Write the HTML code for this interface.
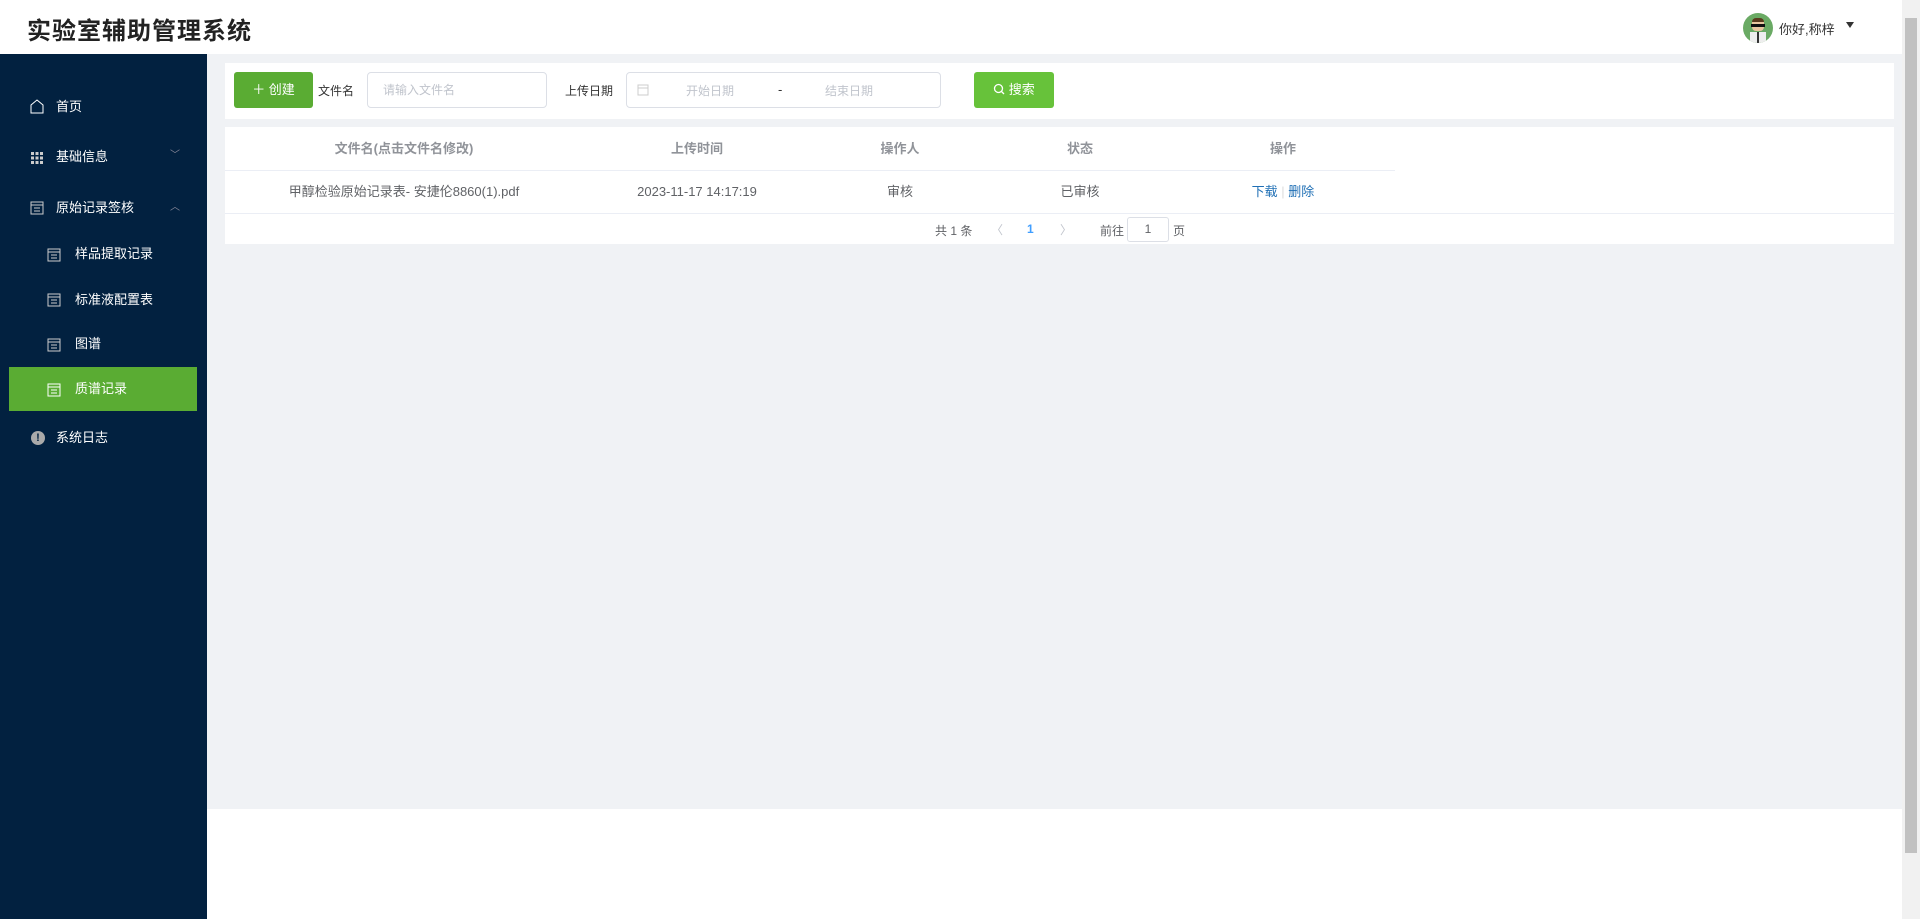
<!DOCTYPE html>
<html><head><meta charset="utf-8"><style>
*{margin:0;padding:0;box-sizing:border-box}
body{width:1920px;height:919px;overflow:hidden;font-family:"Liberation Sans","Noto Sans CJK SC",sans-serif;background:#fff;position:relative;color:#606266;font-size:14px}
.abs{position:absolute}
.hdr{left:0;top:0;width:1902px;height:54px;background:#fff}
.title{left:27px;top:11px;font-size:24px;font-weight:bold;color:#222;letter-spacing:1px}
.side{left:0;top:54px;width:207px;height:865px;background:#022140}
.main{left:207px;top:54px;width:1695px;height:755px;background:#f0f2f5}
.sb{left:1902px;top:0;width:18px;height:919px;background:#f1f1f1}
.sbt{left:1905px;top:18px;width:12px;height:835px;background:#c1c1c1}
.mi{position:absolute;color:#fff;font-size:13px;height:20px;line-height:20px}
.card{background:#fff}
.btn{border-radius:3px;color:#fff;text-align:center;font-size:13px;line-height:36px}
.inp{border:1px solid #dcdfe6;border-radius:4px;background:#fff;color:#c0c4cc;font-size:13px}
.th{position:absolute;top:127px;height:43px;line-height:43px;text-align:center;color:#909399;font-weight:bold;font-size:13px}
.td{position:absolute;top:170px;height:43px;line-height:43px;text-align:center;color:#606266;font-size:13px}
</style></head><body>
<div class="abs hdr"></div>
<div class="abs title">实验室辅助管理系统</div>
<div class="abs" style="left:1743px;top:13px;width:30px;height:30px;border-radius:50%;background:#6aaa64;overflow:hidden">
<div style="position:absolute;left:9px;top:5px;width:12px;height:13px;background:#e9c6a0;border-radius:4px;border-top:4px solid #5a3a1e"></div>
<div style="position:absolute;left:8px;top:11px;width:14px;height:3px;background:#111"></div>
<div style="position:absolute;left:7px;top:19px;width:16px;height:12px;background:#eee"></div>
<div style="position:absolute;left:14px;top:19px;width:2px;height:11px;background:#333"></div></div>
<div class="abs" style="left:1779px;top:19px;font-size:13px;color:#333">你好,称梓</div>
<div class="abs" style="left:1846px;top:22px;width:0;height:0;border-left:4px solid transparent;border-right:4px solid transparent;border-top:6px solid #333"></div>

<div class="abs side"></div>
<svg class="abs" style="left:30px;top:99px" width="14" height="15" viewBox="0 0 14 15"><path d="M1 6 L7 1 L13 6 V14 H1Z" fill="none" stroke="#fff" stroke-width="1"/></svg>
<div class="mi" style="left:56px;top:97px">首页</div>
<svg class="abs" style="left:31px;top:152px" width="12" height="12"><g fill="#ccc"><rect x="0" y="0" width="3" height="3"/><rect x="4.5" y="0" width="3" height="3"/><rect x="9" y="0" width="3" height="3"/><rect x="0" y="4.5" width="3" height="3"/><rect x="4.5" y="4.5" width="3" height="3"/><rect x="9" y="4.5" width="3" height="3"/><rect x="0" y="9" width="3" height="3"/><rect x="4.5" y="9" width="3" height="3"/><rect x="9" y="9" width="3" height="3"/></g></svg>
<div class="mi" style="left:56px;top:147px">基础信息</div>
<div class="mi" style="left:170px;top:146px;color:#889;font-size:10px">﹀</div>
<svg class="abs" style="left:30px;top:201px" width="14" height="14"><rect x="1" y="1" width="12" height="12" fill="none" stroke="#ccc"/><path d="M1 4H13M4 7H10M4 10H10" stroke="#ccc"/></svg>
<div class="mi" style="left:56px;top:198px">原始记录签核</div>
<div class="mi" style="left:170px;top:198px;color:#889;font-size:10px">︿</div>
<div class="abs" style="left:9px;top:367px;width:188px;height:44px;background:#5aac33"></div>
<svg class="abs" style="left:47px;top:248px" width="14" height="14"><rect x="1" y="1" width="12" height="12" fill="none" stroke="#ccc"/><path d="M1 4H13M4 7H10M4 10H10" stroke="#ccc"/></svg>
<div class="mi" style="left:75px;top:244px">样品提取记录</div>
<svg class="abs" style="left:47px;top:293px" width="14" height="14"><rect x="1" y="1" width="12" height="12" fill="none" stroke="#ccc"/><path d="M1 4H13M4 7H10M4 10H10" stroke="#ccc"/></svg>
<div class="mi" style="left:75px;top:290px">标准液配置表</div>
<svg class="abs" style="left:47px;top:338px" width="14" height="14"><rect x="1" y="1" width="12" height="12" fill="none" stroke="#ccc"/><path d="M1 4H13M4 7H10M4 10H10" stroke="#ccc"/></svg>
<div class="mi" style="left:75px;top:334px">图谱</div>
<svg class="abs" style="left:47px;top:383px" width="14" height="14"><rect x="1" y="1" width="12" height="12" fill="none" stroke="#fff"/><path d="M1 4H13M4 7H10M4 10H10" stroke="#fff"/></svg>
<div class="mi" style="left:75px;top:379px">质谱记录</div>
<div class="abs" style="left:31px;top:431px;width:14px;height:14px;border-radius:50%;background:#aaa;color:#022140;font-size:11px;line-height:14px;text-align:center;font-weight:bold">!</div>
<div class="mi" style="left:56px;top:428px">系统日志</div>

<div class="abs main"></div>
<div class="abs card" style="left:225px;top:63px;width:1669px;height:56px"></div>
<div class="abs btn" style="left:234px;top:72px;width:79px;background:#5aac33">＋ 创建</div>
<div class="abs" style="left:318px;top:82px;font-size:12px;color:#333">文件名</div>
<div class="abs inp" style="left:367px;top:72px;width:180px;height:36px;padding:0 15px;line-height:34px;font-size:12px">请输入文件名</div>
<div class="abs" style="left:565px;top:82px;font-size:12px;color:#333">上传日期</div>
<div class="abs inp" style="left:626px;top:72px;width:315px;height:36px"></div>
<svg class="abs" style="left:637px;top:84px" width="12" height="12"><rect x="1" y="1" width="10" height="10" fill="none" stroke="#ccc"/><path d="M1 4H11" stroke="#ccc"/></svg>
<div class="abs" style="left:686px;top:82px;font-size:12px;color:#c0c4cc">开始日期</div>
<div class="abs" style="left:778px;top:82px;font-size:13px;color:#333">-</div>
<div class="abs" style="left:825px;top:82px;font-size:12px;color:#c0c4cc">结束日期</div>
<div class="abs btn" style="left:974px;top:72px;width:80px;background:#67c23a;font-size:13px"><svg width="12" height="12" style="vertical-align:-1px"><circle cx="5.5" cy="5.5" r="4" fill="none" stroke="#fff" stroke-width="1.3"/><path d="M8.5 8.5L11 11" stroke="#fff" stroke-width="1.3"/></svg> 搜索</div>

<div class="abs card" style="left:225px;top:127px;width:1669px;height:117px"></div>
<div class="abs" style="left:225px;top:170px;width:1170px;height:1px;background:#ebeef5"></div>
<div class="abs" style="left:225px;top:213px;width:1669px;height:1px;background:#ebeef5"></div>
<div class="th" style="left:225px;width:358px">文件名(点击文件名修改)</div>
<div class="th" style="left:583px;width:228px">上传时间</div>
<div class="th" style="left:811px;width:178px">操作人</div>
<div class="th" style="left:989px;width:182px">状态</div>
<div class="th" style="left:1171px;width:224px">操作</div>
<div class="td" style="left:225px;width:358px">甲醇检验原始记录表- 安捷伦8860(1).pdf</div>
<div class="td" style="left:583px;width:228px">2023-11-17 14:17:19</div>
<div class="td" style="left:811px;width:178px">审核</div>
<div class="td" style="left:989px;width:182px">已审核</div>
<div class="td" style="left:1171px;width:224px;color:#1f6fb5">下载 <span style="color:#ddd">|</span> 删除</div>
<div class="abs" style="left:935px;top:222px;font-size:12px;color:#606266">共 1 条</div>
<div class="abs" style="left:991px;top:221px;font-size:12px;color:#c0c4cc">〈</div>
<div class="abs" style="left:1027px;top:222px;font-size:12px;color:#409eff;font-weight:bold">1</div>
<div class="abs" style="left:1060px;top:221px;font-size:12px;color:#c0c4cc">〉</div>
<div class="abs" style="left:1100px;top:222px;font-size:12px">前往</div>
<div class="abs" style="left:1127px;top:217px;width:42px;height:25px;border:1px solid #dcdfe6;border-radius:3px;text-align:center;line-height:23px;font-size:12px">1</div>
<div class="abs" style="left:1173px;top:222px;font-size:12px">页</div>

<div class="abs sb"></div>
<div class="abs sbt"></div>
</body></html>
